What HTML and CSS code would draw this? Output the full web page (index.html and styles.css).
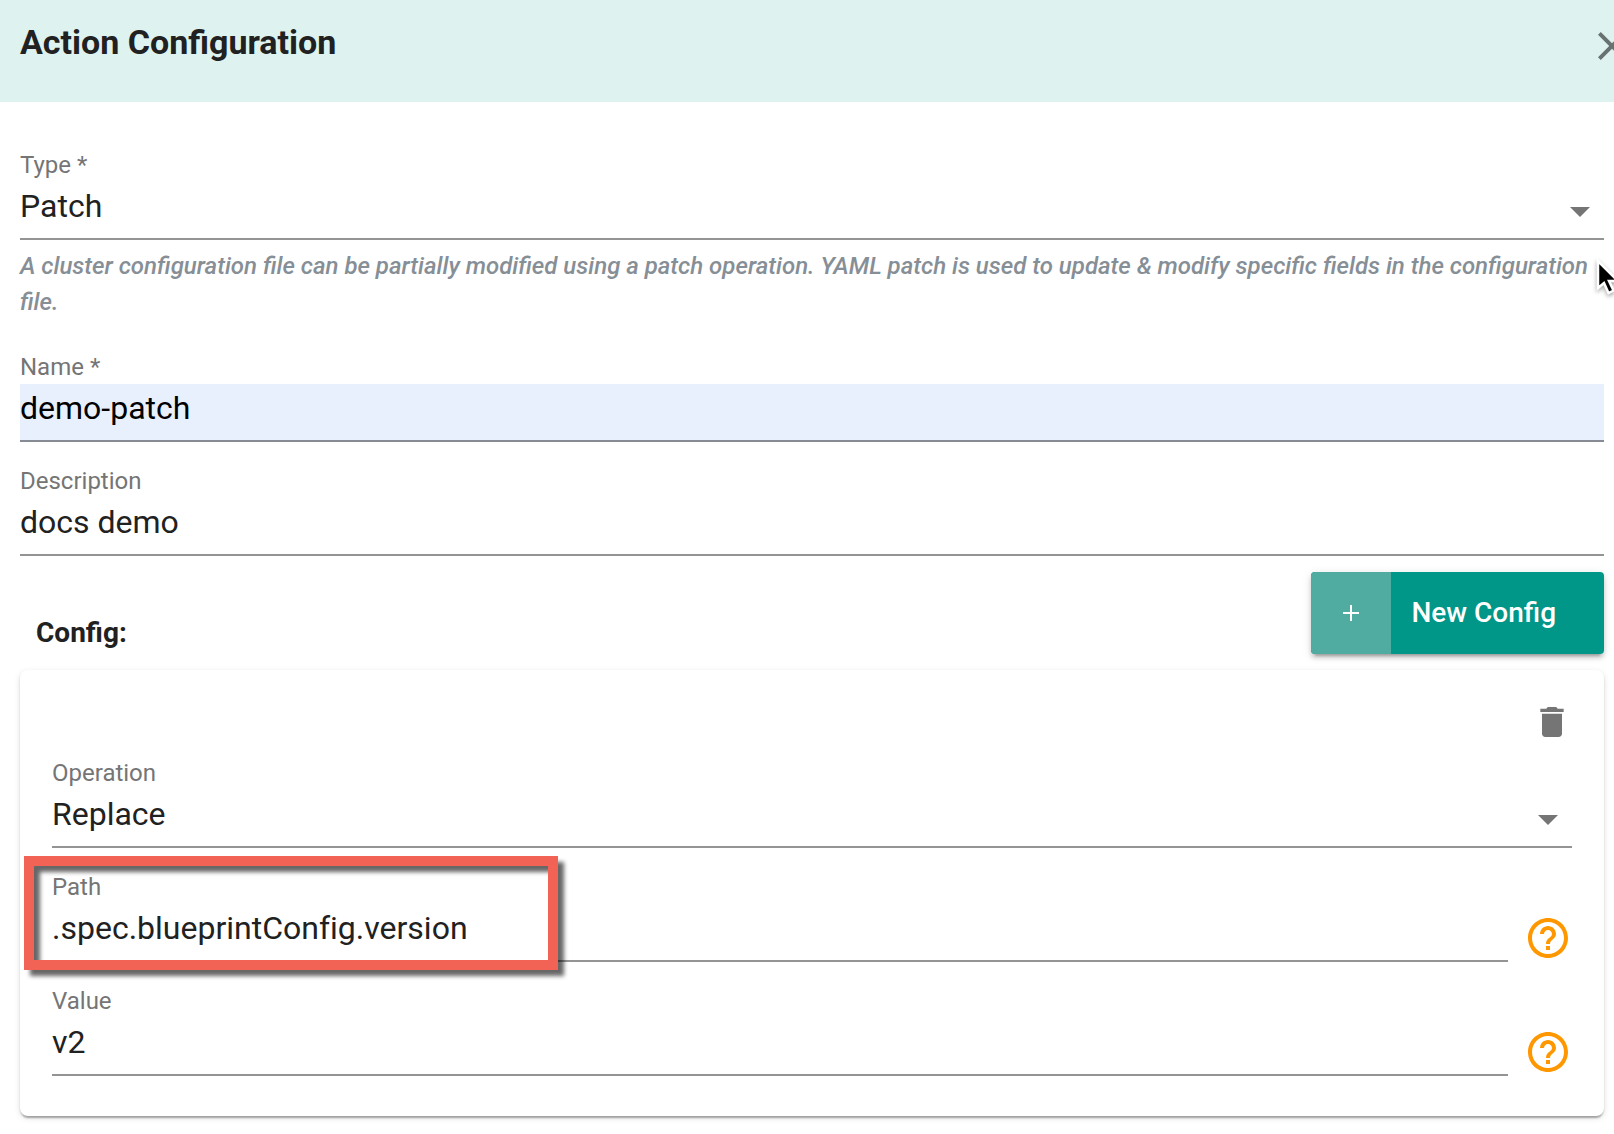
FILE: index.html
```html
<!DOCTYPE html>
<html lang="en">
<head>
  <meta charset="utf-8">
  <meta name="viewport" content="width=device-width, initial-scale=1">
  <title>Action Configuration</title>
  <link rel="stylesheet" href="styles.css">
</head>
<body>
  <header class="panel-header">
    <h1 class="panel-title">Action Configuration</h1>
    <button class="icon-button close-button" type="button" aria-label="Close">
      <svg class="icon-large" viewBox="0 0 24 24" aria-hidden="true"><path d="M19 6.41L17.59 5 12 10.59 6.41 5 5 6.41 10.59 12 5 17.59 6.41 19 12 13.41 17.59 19 19 17.59 13.41 12z"/></svg>
    </button>
  </header>

  <form class="panel-body">
    <div class="type-group">
      <div class="field">
        <label class="field-label" for="type">Type *</label>
        <div class="select-wrap">
          <select class="field-control" id="type"><option>Patch</option></select>
          <svg class="select-arrow" viewBox="0 0 20 10" aria-hidden="true"><path d="M0 0h20L10 10z"/></svg>
        </div>
      </div>
      <p class="hint">A cluster configuration file can be partially modified using a patch operation. YAML patch is used to update &amp; modify specific fields in the configuration file.</p>
      <svg class="cursor" viewBox="0 0 24 40" aria-hidden="true"><path d="M3 3v27l6-5 4.500 10 5-2.500-4.500-9.500h9z" fill="#000" stroke="#fff" stroke-width="2.500"/></svg>
    </div>

    <div class="field-stack">
      <div class="field">
        <label class="field-label" for="name">Name *</label>
        <input class="field-control autofilled" id="name" type="text" value="demo-patch">
      </div>
      <div class="field">
        <label class="field-label" for="description">Description</label>
        <input class="field-control" id="description" type="text" value="docs demo">
      </div>
    </div>

    <div class="config-bar">
      <h2 class="config-title">Config:</h2>
      <button class="new-config" type="button">
        <span class="new-config-icon"><svg class="plus" viewBox="0 0 16 16" aria-hidden="true"><path d="M7 0h2v7h7v2H9v7H7V9H0V7h7z"/></svg></span>
        <span class="new-config-text">New Config</span>
      </button>
    </div>

    <section class="card">
      <button class="icon-button delete-button" type="button" aria-label="Delete">
        <svg class="icon-medium" viewBox="0 0 24 24" aria-hidden="true"><path d="M6 19c0 1.100.900 2 2 2h8c1.100 0 2-.900 2-2V7H6v12zM19 4h-3.500l-1-1h-5l-1 1H5v2h14V4z"/></svg>
      </button>
      <div class="field-stack">
        <div class="field">
          <label class="field-label" for="operation">Operation</label>
          <div class="select-wrap">
            <select class="field-control" id="operation"><option>Replace</option></select>
            <svg class="select-arrow" viewBox="0 0 20 10" aria-hidden="true"><path d="M0 0h20L10 10z"/></svg>
          </div>
        </div>
        <div class="help-row">
          <div class="field">
            <label class="field-label" for="path">Path</label>
            <input class="field-control" id="path" type="text" value=".spec.blueprintConfig.version">
          </div>
          <button class="icon-button help-button" type="button" aria-label="Help for path">
            <svg class="icon-large" viewBox="0 0 24 24" aria-hidden="true"><path d="M11 18h2v-2h-2v2zm1-16C6.480 2 2 6.480 2 12s4.480 10 10 10 10-4.480 10-10S17.520 2 12 2zm0 18c-4.410 0-8-3.590-8-8s3.590-8 8-8 8 3.590 8 8-3.590 8-8 8zm0-14c-2.210 0-4 1.790-4 4h2c0-1.100.900-2 2-2s2 .900 2 2c0 2-3 1.750-3 5h2c0-2.250 3-2.500 3-5 0-2.210-1.790-4-4-4z"/></svg>
          </button>
          <div class="highlight"></div>
        </div>
        <div class="help-row">
          <div class="field">
            <label class="field-label" for="value">Value</label>
            <input class="field-control" id="value" type="text" value="v2">
          </div>
          <button class="icon-button help-button" type="button" aria-label="Help for value">
            <svg class="icon-large" viewBox="0 0 24 24" aria-hidden="true"><path d="M11 18h2v-2h-2v2zm1-16C6.480 2 2 6.480 2 12s4.480 10 10 10 10-4.480 10-10S17.520 2 12 2zm0 18c-4.410 0-8-3.590-8-8s3.590-8 8-8 8 3.590 8 8-3.590 8-8 8zm0-14c-2.210 0-4 1.790-4 4h2c0-1.100.900-2 2-2s2 .900 2 2c0 2-3 1.750-3 5h2c0-2.250 3-2.500 3-5 0-2.210-1.790-4-4-4z"/></svg>
          </button>
        </div>
      </div>
    </section>
  </form>
</body>
</html>
```
FILE: styles.css
```css
*,
*::before,
*::after {
  box-sizing: border-box;
}

body {
  margin: 0;
  overflow-x: hidden;
  background: #fff;
  color: #212121;
  font-family: Roboto, "Liberation Sans", sans-serif;
}

h1,
h2,
p {
  margin: 0;
}

svg {
  display: block;
  fill: currentColor;
}

button,
input,
select {
  font-family: inherit;
}

/* Header */
.panel-header {
  display: flex;
  justify-content: space-between;
  align-items: flex-start;
  padding: 22px 0 32px 20px;
  background: #def2f0;
}

.panel-title {
  font-size: 34px;
  line-height: 40px;
  font-weight: 700;
}

.icon-button {
  display: block;
  flex: none;
  padding: 0;
  border: 0;
  background: none;
  color: #757575;
  cursor: pointer;
}

.icon-large {
  width: 48px;
  height: 48px;
}

.icon-medium {
  width: 40px;
  height: 40px;
}

.close-button {
  margin-right: -22px;
  color: #687371;
}

/* Fields */
.panel-body {
  padding: 48px 10px 18px 20px;
}

.type-group {
  position: relative;
  margin-bottom: 32px;
}

.field-stack {
  display: flex;
  flex-direction: column;
  gap: 24px;
}

.field {
  display: flex;
  flex: 1;
  flex-direction: column;
  gap: 2px;
  min-width: 0;
}

.field-label {
  color: #757575;
  font-size: 24px;
  line-height: 30px;
}

.field-control {
  display: block;
  width: 100%;
  height: 58px;
  padding: 5px 0 13px;
  border: 0;
  border-bottom: 2px solid rgba(0, 0, 0, 0.42);
  border-radius: 0;
  outline: 0;
  appearance: none;
  background-color: transparent;
  color: #212121;
  font-size: 32px;
  line-height: 38px;
  font-variant-ligatures: none;
}

.autofilled {
  background-color: #e8f0fe;
  color: #000;
}

.select-wrap {
  position: relative;
}

.select-arrow {
  position: absolute;
  top: 25px;
  right: 14px;
  width: 20px;
  height: 10px;
  color: #757575;
  pointer-events: none;
}

.hint {
  margin-top: 8px;
  color: #868e96;
  font-size: 24px;
  line-height: 36px;
  font-style: italic;
  font-weight: 500;
}

.cursor {
  position: absolute;
  top: 108px;
  right: -15px;
  width: 24px;
  height: 40px;
  filter: drop-shadow(0 2px 2px rgba(0, 0, 0, 0.35));
}

/* Config section */
.config-bar {
  display: flex;
  justify-content: space-between;
  align-items: center;
  padding: 16px 0 16px 16px;
}

.config-title {
  padding-top: 40px;
  font-size: 28px;
  line-height: 32px;
  font-weight: 700;
}

.new-config {
  display: flex;
  padding: 0;
  border: 0;
  border-radius: 4px;
  overflow: hidden;
  background: #009688;
  box-shadow: 0 6px 2px -4px rgba(0, 0, 0, 0.2), 0 4px 4px rgba(0, 0, 0, 0.14), 0 2px 10px rgba(0, 0, 0, 0.12);
  color: #fff;
  font-size: 28px;
  line-height: 82px;
  font-weight: 500;
  cursor: pointer;
}

.new-config-icon {
  display: flex;
  justify-content: center;
  align-items: center;
  width: 80px;
  background: #50aba0;
}

.plus {
  width: 16px;
  height: 16px;
}

.new-config-text {
  padding: 0 48px 0 20px;
}

.card {
  padding: 32px 32px 40px;
  border-radius: 8px;
  background: #fff;
  box-shadow: 0 4px 2px -2px rgba(0, 0, 0, 0.2), 0 2px 2px rgba(0, 0, 0, 0.14), 0 2px 6px rgba(0, 0, 0, 0.12);
}

.delete-button {
  margin: 0 0 16px auto;
}

.help-row {
  position: relative;
  display: flex;
  align-items: flex-end;
  gap: 16px;
}

.help-button {
  color: #ff9800;
}

/* Callout frame drawn over the path field */
.highlight {
  position: absolute;
  top: -16px;
  left: -28px;
  width: 534px;
  height: 114px;
  border: 10px solid #f26355;
  filter: drop-shadow(6px 6px 2px rgba(0, 0, 0, 0.6));
  pointer-events: none;
}
```
